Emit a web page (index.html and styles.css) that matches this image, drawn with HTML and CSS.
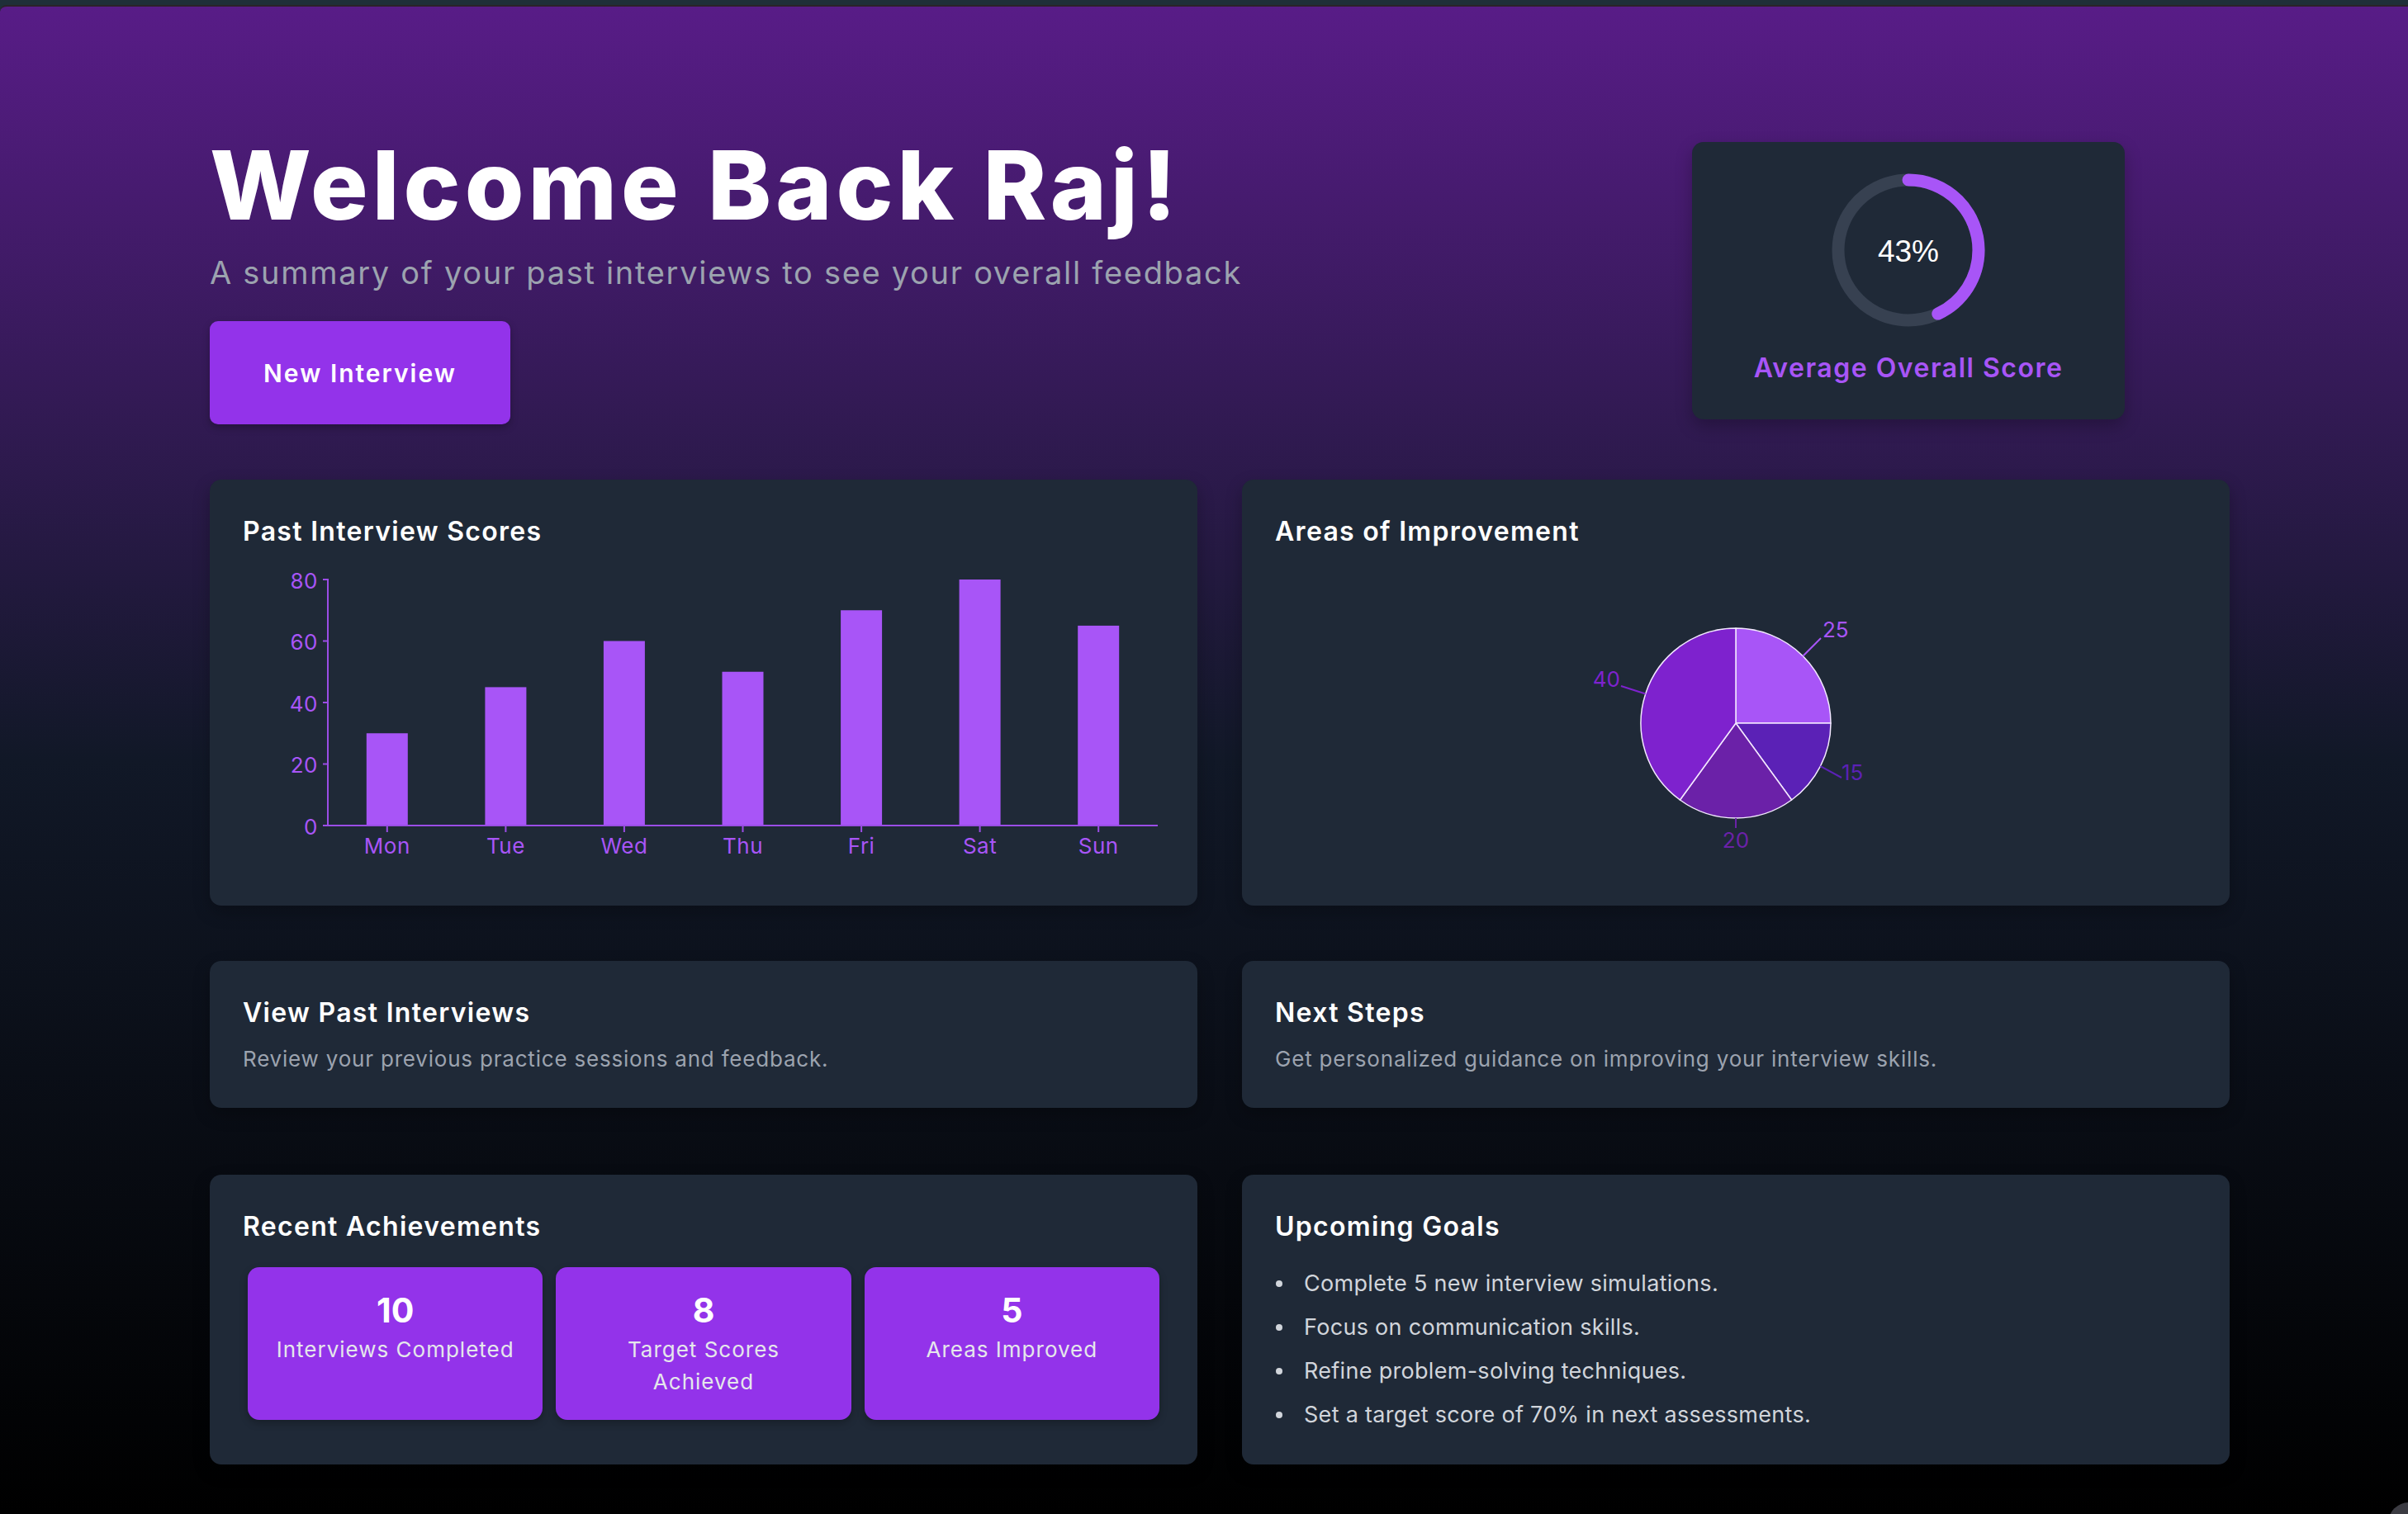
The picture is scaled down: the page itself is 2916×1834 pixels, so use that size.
FILE: index.html
```html
<!DOCTYPE html>
<html lang="en">
<head>
<meta charset="utf-8">
<title>Dashboard</title>
<link rel="stylesheet" href="styles.css">
</head>
<body>
<div class="page">
  <div class="container">
    <header class="hero">
      <div class="hero-text">
        <h1 class="hero-title">Welcome Back Raj!</h1>
        <p class="hero-sub">A summary of your past interviews to see your overall feedback</p>
        <button class="btn-primary">New Interview</button>
      </div>
      <div class="score-card">
        <svg class="ring" width="190" height="190" viewBox="0 0 190 190">
          <circle cx="95" cy="95" r="85" fill="none" stroke="#374151" stroke-width="15"/>
          <circle cx="95" cy="95" r="85" fill="none" stroke="#a855f7" stroke-width="15" stroke-linecap="round" stroke-dasharray="229.65 534.07" transform="rotate(-90 95 95)"/>
          <text x="95" y="96" class="ring-text" text-anchor="middle" dominant-baseline="central">43%</text>
        </svg>
        <div class="score-label">Average Overall Score</div>
      </div>
    </header>

    <section class="grid row-charts">
      <div class="card">
        <h2 class="card-title">Past Interview Scores</h2>
        <svg class="chart" width="1116" height="391" viewBox="0 0 1116 391">
          <g class="bars" fill="#a855f7">
            <rect x="149.8" y="222.25" width="50" height="111.75"/>
            <rect x="293.4" y="166.4" width="50" height="167.6"/>
            <rect x="436.9" y="110.5" width="50" height="223.5"/>
            <rect x="580.5" y="147.75" width="50" height="186.25"/>
            <rect x="724.1" y="73.25" width="50" height="260.75"/>
            <rect x="867.6" y="36" width="50" height="298"/>
            <rect x="1011.2" y="91.9" width="50" height="242.1"/>
          </g>
          <g stroke="#9b4de6" stroke-width="2" fill="none">
            <line x1="103" y1="35" x2="103" y2="335"/>
            <line x1="102" y1="334" x2="1108" y2="334"/>
            <line x1="97" y1="334" x2="103" y2="334"/>
            <line x1="97" y1="259.5" x2="103" y2="259.5"/>
            <line x1="97" y1="185" x2="103" y2="185"/>
            <line x1="97" y1="110.5" x2="103" y2="110.5"/>
            <line x1="97" y1="36" x2="103" y2="36"/>
            <line x1="174.8" y1="334" x2="174.8" y2="342"/>
            <line x1="318.4" y1="334" x2="318.4" y2="342"/>
            <line x1="461.9" y1="334" x2="461.9" y2="342"/>
            <line x1="605.5" y1="334" x2="605.5" y2="342"/>
            <line x1="749.1" y1="334" x2="749.1" y2="342"/>
            <line x1="892.6" y1="334" x2="892.6" y2="342"/>
            <line x1="1036.2" y1="334" x2="1036.2" y2="342"/>
          </g>
          <g class="axis-text" text-anchor="end" dominant-baseline="central">
            <text x="91" y="335">0</text>
            <text x="91" y="260">20</text>
            <text x="91" y="186">40</text>
            <text x="91" y="111">60</text>
            <text x="91" y="37">80</text>
          </g>
          <g class="axis-text" text-anchor="middle" dominant-baseline="central">
            <text x="174.8" y="358">Mon</text>
            <text x="318.4" y="358">Tue</text>
            <text x="461.9" y="358">Wed</text>
            <text x="605.5" y="358">Thu</text>
            <text x="749.1" y="358">Fri</text>
            <text x="892.6" y="358">Sat</text>
            <text x="1036.2" y="358">Sun</text>
          </g>
        </svg>
      </div>
      <div class="card">
        <h2 class="card-title">Areas of Improvement</h2>
        <svg class="chart" width="1116" height="391" viewBox="0 0 1116 391">
          <g stroke="#f3e8ff" stroke-width="1.5" stroke-linejoin="round">
            <path d="M558,210 L558,95 A115,115 0 0 1 673,210 Z" fill="#a855f7"/>
            <path d="M558,210 L673,210 A115,115 0 0 1 625.6,303 Z" fill="#5b21b6"/>
            <path d="M558,210 L625.6,303 A115,115 0 0 1 490.4,303 Z" fill="#6b21a8"/>
            <path d="M558,210 L490.4,303 A115,115 0 0 1 558,95 Z" fill="#7e22ce"/>
          </g>
          <g stroke-width="2" fill="none">
            <line x1="639.3" y1="128.7" x2="661" y2="107" stroke="#a855f7"/>
            <line x1="660.5" y1="262.2" x2="686" y2="276" stroke="#5b21b6"/>
            <line x1="558" y1="325" x2="558" y2="337" stroke="#6b21a8"/>
            <line x1="448.6" y1="174.5" x2="419" y2="165" stroke="#7e22ce"/>
          </g>
          <g class="pie-text" dominant-baseline="central">
            <text x="663" y="96" fill="#a855f7">25</text>
            <text x="686" y="269" fill="#5b21b6">15</text>
            <text x="558" y="351" fill="#6b21a8" text-anchor="middle">20</text>
            <text x="418" y="156" fill="#7e22ce" text-anchor="end">40</text>
          </g>
        </svg>
      </div>
    </section>

    <section class="grid row-links">
      <div class="card">
        <h2 class="card-title">View Past Interviews</h2>
        <p class="card-desc">Review your previous practice sessions and feedback.</p>
      </div>
      <div class="card">
        <h2 class="card-title">Next Steps</h2>
        <p class="card-desc">Get personalized guidance on improving your interview skills.</p>
      </div>
    </section>

    <section class="grid row-bottom">
      <div class="card">
        <h2 class="card-title">Recent Achievements</h2>
        <div class="achievements">
          <div class="achievement">
            <div class="ach-num">10</div>
            <div class="ach-label">Interviews Completed</div>
          </div>
          <div class="achievement">
            <div class="ach-num">8</div>
            <div class="ach-label">Target Scores Achieved</div>
          </div>
          <div class="achievement">
            <div class="ach-num">5</div>
            <div class="ach-label">Areas Improved</div>
          </div>
        </div>
      </div>
      <div class="card">
        <h2 class="card-title">Upcoming Goals</h2>
        <ul class="goals">
          <li>Complete 5 new interview simulations.</li>
          <li>Focus on communication skills.</li>
          <li>Refine problem-solving techniques.</li>
          <li>Set a target score of 70% in next assessments.</li>
        </ul>
      </div>
    </section>
  </div>
  <div class="corner-dot"></div>
</div>
</body>
</html>
```

FILE: styles.css
```css
* { box-sizing: border-box; }

html, body {
  margin: 0;
  padding: 0;
}

body {
  background: #1f2f38;
  padding-top: 6px;
  font-family: Inter, "Noto Sans", sans-serif;
  overflow: hidden;
}

.page {
  position: relative;
  min-height: 1828px;
  border-top: 2px solid #2a2329;
  border-top-left-radius: 8px;
  background: linear-gradient(to bottom, #581c87 0%, #111827 50%, #000000 100%);
  padding-top: 152px;
  padding-bottom: 60px;
  overflow: hidden;
}

.container {
  padding-left: 254px;
  width: 2700px;
}

.hero {
  display: flex;
  justify-content: space-between;
  align-items: flex-start;
  padding-right: 127px;
}

.hero-title {
  margin: 0;
  font-size: 116px;
  line-height: 128px;
  font-weight: 800;
  color: #ffffff;
  letter-spacing: 5px;
}

.hero-sub {
  margin: 18px 0 0;
  font-size: 38px;
  line-height: 49px;
  color: #9ca3af;
  font-weight: 400;
  letter-spacing: 1.7px;
}

.btn-primary {
  margin-top: 34px;
  display: block;
  height: 125px;
  width: 364px;
  border: none;
  border-radius: 10px;
  background: #9333ea;
  color: #ffffff;
  font-family: Inter, "Noto Sans", sans-serif;
  font-size: 30px;
  font-weight: 600;
  letter-spacing: 2px;
  box-shadow: 0 4px 10px rgba(0, 0, 0, 0.25);
}

.score-card {
  margin-top: 12px;
  width: 524px;
  height: 336px;
  background: #1f2937;
  border-radius: 14px;
  padding-top: 36px;
  display: flex;
  flex-direction: column;
  align-items: center;
  box-shadow: 0 8px 20px rgba(0, 0, 0, 0.25);
}

.ring { display: block; }

.ring-text {
  font-family: "Liberation Sans", Arial, sans-serif;
  font-size: 37px;
  fill: #ffffff;
}

.score-label {
  margin-top: 25px;
  font-size: 32px;
  line-height: 45px;
  font-weight: 600;
  color: #a855f7;
  letter-spacing: 1.5px;
}

.grid {
  display: grid;
  grid-template-columns: 1196px 1196px;
  column-gap: 54px;
}

.row-charts { margin-top: 67px; }
.row-links { margin-top: 67px; }
.row-bottom { margin-top: 81px; }

.card {
  background: #1f2937;
  border-radius: 14px;
  padding: 40px;
  box-shadow: 0 8px 20px rgba(0, 0, 0, 0.25);
}

.row-charts .card { height: 516px; }
.row-links .card { height: 178px; }

.card-title {
  margin: 0;
  font-size: 32px;
  line-height: 45px;
  font-weight: 600;
  color: #ffffff;
  letter-spacing: 1.3px;
}

.chart { display: block; }

.axis-text text {
  font-family: Inter, "Noto Sans", sans-serif;
  font-size: 26px;
  fill: #a855f7;
  letter-spacing: 0.5px;
}

.pie-text text {
  font-family: Inter, "Noto Sans", sans-serif;
  font-size: 26px;
}

.card-desc {
  margin: 14px 0 0;
  font-size: 26px;
  line-height: 39px;
  color: #9ca3af;
  letter-spacing: 0.8px;
}

.achievements {
  margin-top: 27px;
  padding: 0 6px;
  display: grid;
  grid-template-columns: repeat(3, 1fr);
  column-gap: 16px;
}

.achievement {
  background: #9333ea;
  border-radius: 14px;
  padding: 28px 30px 27px;
  text-align: center;
  min-height: 185px;
  box-shadow: 0 4px 10px rgba(0, 0, 0, 0.25);
}

.ach-num {
  font-size: 41px;
  line-height: 48px;
  font-weight: 700;
  color: #ffffff;
  margin-bottom: 4px;
}

.ach-label {
  font-size: 26px;
  line-height: 39px;
  color: #e5e7eb;
  letter-spacing: 1px;
}

.goals {
  list-style: none;
  margin: 27px 0 0;
  padding: 0;
  display: flex;
  flex-direction: column;
  gap: 13px;
}

.goals li {
  position: relative;
  padding-left: 35px;
  font-size: 27px;
  line-height: 40px;
  color: #d1d5db;
  letter-spacing: 0.3px;
}

.goals li::before {
  content: "";
  position: absolute;
  left: 1px;
  top: 16px;
  width: 8px;
  height: 8px;
  border-radius: 50%;
  background: #d1d5db;
}

.corner-dot {
  position: absolute;
  right: -26px;
  bottom: -36px;
  width: 50px;
  height: 50px;
  border-radius: 50%;
  background: #3b3b42;
}
```
